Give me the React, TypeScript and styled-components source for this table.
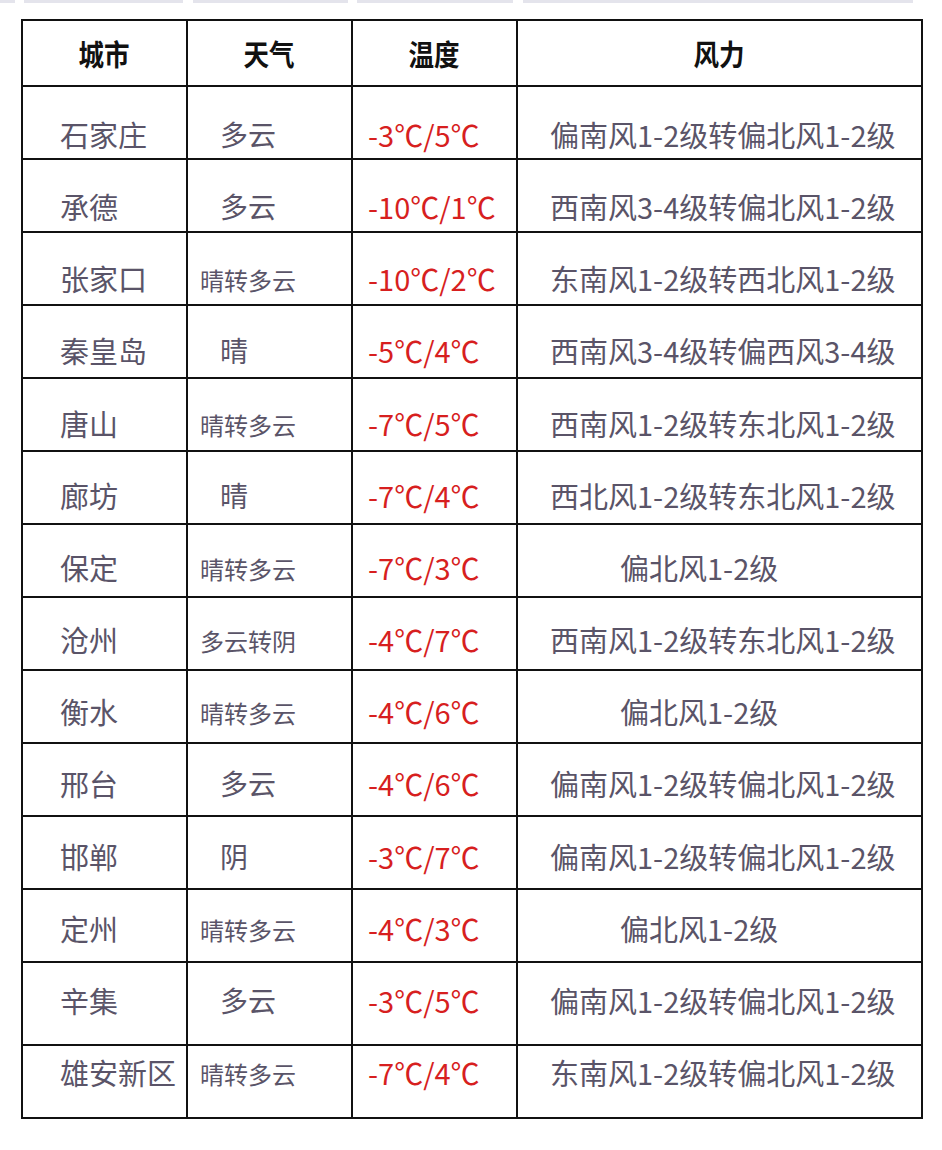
import React from "react";
import styled, { createGlobalStyle } from "styled-components";

const Global = createGlobalStyle`
  html, body { margin: 0; padding: 0; background: #ffffff; }
  body { font-family: "Noto Sans CJK SC", "Noto Sans", sans-serif; }
`;

const Page = styled.div`
  width: 942px;
  min-height: 1150px;
  background: #ffffff;
`;

const Strip = styled.div`
  display: flex;
  height: 3px;
`;

const StripBar = styled.div<{ $w: number; $gap: number }>`
  width: ${(p) => p.$w}px;
  margin-left: ${(p) => p.$gap}px;
  height: 3px;
  background: #e4e4ec;
`;

const Table = styled.table`
  margin: 16px 0 0 21px;
  border-collapse: collapse;
  table-layout: fixed;
`;

const Col = styled.col<{ $w: number }>`
  width: ${(p) => p.$w}px;
`;

const HeadRow = styled.tr`
  height: 66px;
`;

const HeadCell = styled.th`
  border: 2px solid #111111;
  padding: 0;
  text-align: center;
  vertical-align: middle;
  font-family: "Noto Sans CJK SC", sans-serif;
  font-weight: 700;
  font-size: 29px;
  color: #111111;
`;

const HeadText = styled.span`
  display: inline-block;
  transform: scaleX(0.88);
`;

const Row = styled.tr<{ $h: number }>`
  height: ${(p) => p.$h}px;
`;

const Cell = styled.td<{ $top: number; $indent: number }>`
  border: 2px solid #111111;
  padding: ${(p) => p.$top}px 0 0 ${(p) => p.$indent}px;
  vertical-align: top;
  white-space: nowrap;
  overflow: hidden;
`;

const CityText = styled.span`
  font-size: 29px;
  line-height: 32px;
  color: #5a5468;
`;

const WeatherText = styled.span<{ $small: boolean }>`
  display: inline-block;
  font-size: ${(p) => (p.$small ? 24 : 28)}px;
  line-height: 32px;
  color: #5a5468;
  ${(p) => (p.$small ? "transform: translateY(2px);" : "")}
`;

const TempText = styled.span`
  font-size: 29px;
  line-height: 32px;
  color: #d71f1f;
`;

const WindText = styled.span`
  font-size: 29px;
  line-height: 32px;
  color: #5a5468;
`;

type Rec = { city: string; weather: string; temp: string; wind: string };

const data: Rec[] = [
  { city: "石家庄", weather: "多云", temp: "-3℃/5℃", wind: "偏南风1-2级转偏北风1-2级" },
  { city: "承德", weather: "多云", temp: "-10℃/1℃", wind: "西南风3-4级转偏北风1-2级" },
  { city: "张家口", weather: "晴转多云", temp: "-10℃/2℃", wind: "东南风1-2级转西北风1-2级" },
  { city: "秦皇岛", weather: "晴", temp: "-5℃/4℃", wind: "西南风3-4级转偏西风3-4级" },
  { city: "唐山", weather: "晴转多云", temp: "-7℃/5℃", wind: "西南风1-2级转东北风1-2级" },
  { city: "廊坊", weather: "晴", temp: "-7℃/4℃", wind: "西北风1-2级转东北风1-2级" },
  { city: "保定", weather: "晴转多云", temp: "-7℃/3℃", wind: "偏北风1-2级" },
  { city: "沧州", weather: "多云转阴", temp: "-4℃/7℃", wind: "西南风1-2级转东北风1-2级" },
  { city: "衡水", weather: "晴转多云", temp: "-4℃/6℃", wind: "偏北风1-2级" },
  { city: "邢台", weather: "多云", temp: "-4℃/6℃", wind: "偏南风1-2级转偏北风1-2级" },
  { city: "邯郸", weather: "阴", temp: "-3℃/7℃", wind: "偏南风1-2级转偏北风1-2级" },
  { city: "定州", weather: "晴转多云", temp: "-4℃/3℃", wind: "偏北风1-2级" },
  { city: "辛集", weather: "多云", temp: "-3℃/5℃", wind: "偏南风1-2级转偏北风1-2级" },
  { city: "雄安新区", weather: "晴转多云", temp: "-7℃/4℃", wind: "东南风1-2级转偏北风1-2级" },
];

const strip = [
  { w: 15, gap: 0 },
  { w: 159, gap: 9 },
  { w: 155, gap: 10 },
  { w: 156, gap: 9 },
  { w: 390, gap: 10 },
];

export default function App() {
  return (
    <Page>
      <Global />
      <Strip>
        {strip.map((s, i) => (
          <StripBar key={i} $w={s.w} $gap={s.gap} />
        ))}
      </Strip>
      <Table>
        <colgroup>
          <Col $w={165} />
          <Col $w={165} />
          <Col $w={165} />
          <Col $w={405} />
        </colgroup>
        <thead>
          <HeadRow>
            <HeadCell><HeadText>城市</HeadText></HeadCell>
            <HeadCell><HeadText>天气</HeadText></HeadCell>
            <HeadCell><HeadText>温度</HeadText></HeadCell>
            <HeadCell><HeadText>风力</HeadText></HeadCell>
          </HeadRow>
        </thead>
        <tbody>
          {data.map((r, i) => {
            const last = i === data.length - 1;
            const tall = i === data.length - 2;
            const top = last ? 10 : Math.round(31 - 0.85 * i);
            const small = r.weather.length > 2;
            const shortWind = r.wind.length < 8;
            return (
              <Row key={r.city} $h={tall ? 83 : 73}>
                <Cell $top={top} $indent={37}>
                  <CityText>{r.city}</CityText>
                </Cell>
                <Cell $top={top} $indent={small ? 12 : 32}>
                  <WeatherText $small={small}>{r.weather}</WeatherText>
                </Cell>
                <Cell $top={top} $indent={15}>
                  <TempText>{r.temp}</TempText>
                </Cell>
                <Cell $top={top} $indent={shortWind ? 102 : 32}>
                  <WindText>{r.wind}</WindText>
                </Cell>
              </Row>
            );
          })}
        </tbody>
      </Table>
    </Page>
  );
}
